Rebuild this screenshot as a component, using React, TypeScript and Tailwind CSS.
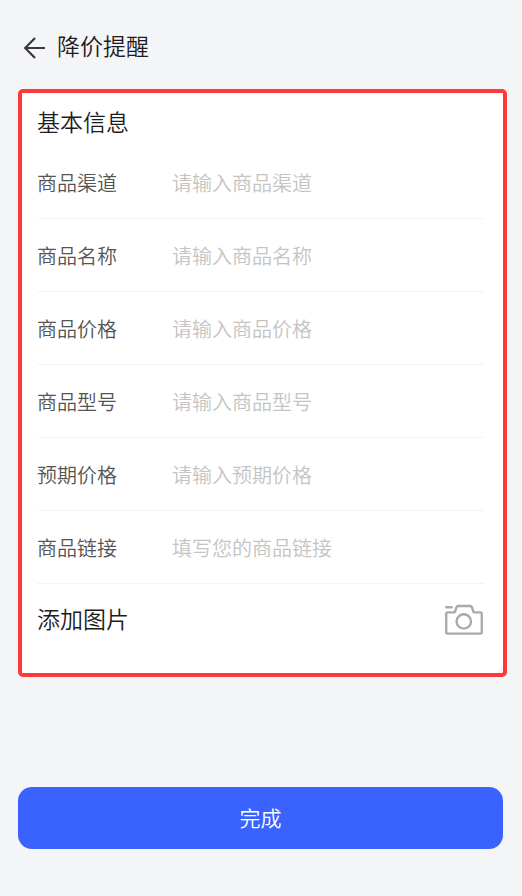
import React from "react";

type Field = { id: string; label: string; placeholder: string };

const fields: Field[] = [
  { id: "channel", label: "商品渠道", placeholder: "请输入商品渠道" },
  { id: "name", label: "商品名称", placeholder: "请输入商品名称" },
  { id: "price", label: "商品价格", placeholder: "请输入商品价格" },
  { id: "model", label: "商品型号", placeholder: "请输入商品型号" },
  { id: "expected", label: "预期价格", placeholder: "请输入预期价格" },
  { id: "link", label: "商品链接", placeholder: "填写您的商品链接" },
];

function BackIcon() {
  return (
    <svg width="22" height="22" viewBox="0 0 22 22" fill="none" stroke="#3a3a3c" strokeWidth="2.2" aria-hidden="true">
      <path d="M12 1 L2.2 11 L12 21 M2.2 11 H22" />
    </svg>
  );
}

function CameraIcon() {
  return (
    <svg
      width="40"
      height="32"
      viewBox="0 0 40 32"
      fill="none"
      stroke="#aaaaaa"
      strokeWidth="2.4"
      strokeLinejoin="round"
      strokeLinecap="round"
      aria-hidden="true"
    >
      <path d="M2.4 3.2 H7.6" />
      <path d="M3.8 8.4 H9.4 Q10.8 8.4 11.3 7 L12.3 3.6 Q12.9 2 14.4 2 H26 Q27.5 2 28.1 3.6 L29.1 7 Q29.6 8.4 31 8.4 H36.2 Q37.8 8.4 37.8 10 V28 Q37.8 29.6 36.2 29.6 H3.8 Q2.2 29.6 2.2 28 V10 Q2.2 8.4 3.8 8.4 Z" />
      <circle cx="19.8" cy="17.4" r="7.2" />
    </svg>
  );
}

function FieldRow({ id, label, placeholder }: Field) {
  return (
    <div className="flex h-[73px] items-center border-b border-[#f4f4f5]">
      <label htmlFor={id} className="w-[135px] shrink-0 pt-0.5 text-xl text-[#555555]">
        {label}
      </label>
      <input
        id={id}
        type="text"
        placeholder={placeholder}
        className="h-10 min-w-0 flex-1 bg-transparent text-xl text-[#333333] outline-none placeholder:text-[#c4c4c4]"
      />
    </div>
  );
}

export default function App() {
  return (
    <main className="min-h-screen bg-[#f4f5f7] pr-[15px] pb-12 pl-[18px] font-['Noto_Sans_CJK_SC',sans-serif] font-[350] text-[#1c1c1e]">
      <header className="flex h-[89px] items-center gap-3 pl-[5px]">
        <button type="button" aria-label="返回" className="shrink-0 pt-1.5">
          <BackIcon />
        </button>
        <h1 className="text-[23px] leading-7 font-[350]">降价提醒</h1>
      </header>

      <form>
        <section className="rounded-[5px] border-4 border-[#ff3838]">
          <div className="rounded-br-xl bg-white pt-3.5 pr-[19px] pb-[17px] pl-[15px]">
            <h2 className="mb-[11px] text-[23px] leading-7 font-[350]">基本信息</h2>
            {fields.map((field) => (
              <FieldRow key={field.id} {...field} />
            ))}
            <div className="flex h-[72px] items-center justify-between">
              <h2 className="pb-1 text-[23px] leading-7 font-[350]">添加图片</h2>
              <button type="button" aria-label="添加图片">
                <CameraIcon />
              </button>
            </div>
          </div>
        </section>

        <div className="mt-[110px] pr-1">
          <button type="button" className="h-[62px] w-full rounded-[14px] bg-[#3a62ff] text-[21px] text-white">
            完成
          </button>
        </div>
      </form>
    </main>
  );
}
